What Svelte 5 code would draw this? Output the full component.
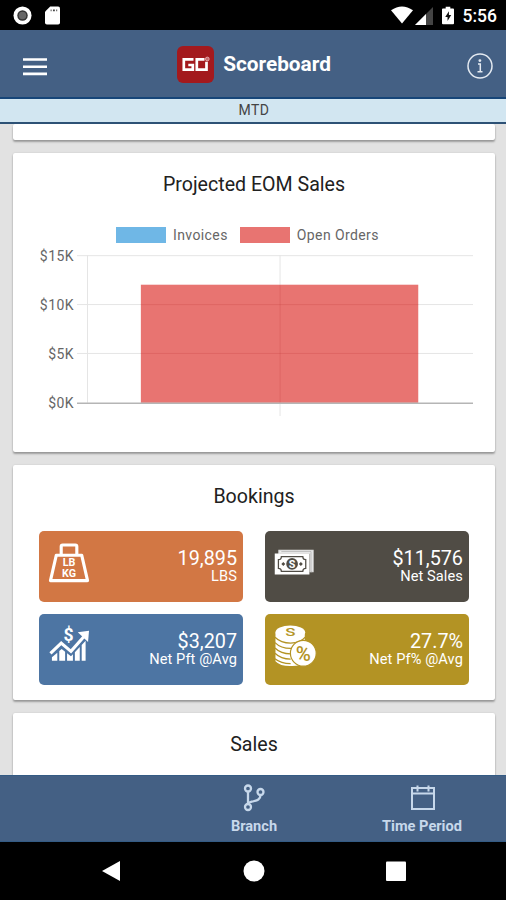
<script>
	const labels = ['$15K', '$10K', '$5K', '$0K'];
	const axisMax = 15;
	const openOrders = 12;

	const bookings = [
		{ icon: 'weight', value: '19,895', label: 'LBS', color: '#d27744' },
		{ icon: 'cash', value: '$11,576', label: 'Net Sales', color: '#504c45' },
		{ icon: 'growth', value: '$3,207', label: 'Net Pft @Avg', color: '#4d75a3' },
		{ icon: 'coins', value: '27.7%', label: 'Net Pf% @Avg', color: '#b39324' }
	];
</script>

<div class="screen">
	<div class="status">
		<svg class="record" viewBox="0 0 20 20">
			<circle cx="10" cy="10" r="9.5" fill="#fff" />
			<circle cx="10" cy="10" r="5.5" fill="#333" />
			<circle cx="10" cy="10" r="4" fill="#666" />
		</svg>
		<svg class="sd" viewBox="0 0 16 19">
			<path d="M5.500 0H14q2 0 2 2v15q0 2-2 2H2q-2 0-2-2V5.500z" fill="#fff" />
			<path d="M6 3h1v2H6zM8.500 3h2v2h-2zM12 3h1v2h-1z" fill="#444" />
		</svg>
		<svg class="wifi" viewBox="0 0 23 18">
			<path d="M0 4Q11.500-4 23 4L11.500 18z" fill="#fff" />
		</svg>
		<svg class="signal" viewBox="0 0 18 18">
			<path d="M18 0v18H0z" fill="#444" />
			<path d="M11 7v11H0z" fill="#fff" />
		</svg>
		<svg class="battery" viewBox="0 0 13 19">
			<path d="M4 0h5v2h3q1 0 1 1v15q0 1-1 1H1q-1 0-1-1V3q0-1 1-1h3z" fill="#fff" />
			<path d="M7.500 5 3.500 11h2.500v4.500l4-6.500h-2.500z" fill="#111" />
		</svg>
		<span class="clock">5:56</span>
	</div>

	<header>
		<svg class="menu" viewBox="0 0 24 18">
			<path d="M0 1.500h24M0 8.700h24M0 15.900h24" stroke="#fff" stroke-width="2.600" />
		</svg>
		<div class="brand">
			<svg class="logo" viewBox="0 0 37 37">
				<rect width="37" height="37" rx="6" fill="#a3191d" />
				<path d="M16.500 13.300H6.800v10.400h9v-4.700h-4.500" fill="none" stroke="#fff" stroke-width="2.700" />
				<path d="M27.500 13.300h-7.700v10.400h9.700v-8" fill="none" stroke="#fff" stroke-width="2.700" />
				<circle cx="30.300" cy="13" r="1.900" fill="#c96a6d" stroke="#e9b5b7" stroke-width=".8" />
			</svg>
			<h1>Scoreboard</h1>
		</div>
		<svg class="info" viewBox="0 0 26 26" fill="none" stroke="#e4eaf1" stroke-width="1.500">
			<circle cx="13" cy="13" r="12" />
			<path d="M11 11h2.300v7.500M10.500 18.700h5" />
			<circle cx="12.900" cy="7.600" r=".7" fill="#e4eaf1" />
		</svg>
	</header>
	<div class="period">MTD</div>

	<main>
		<section class="card previous"></section>

		<section class="card projected">
			<h2>Projected EOM Sales</h2>
			<div class="legend">
				<span class="swatch invoices"></span><span>Invoices</span>
				<span class="swatch orders"></span><span>Open Orders</span>
			</div>
			<div class="chart">
				<div class="axis">
					{#each labels as label}
						<span>{label}</span>
					{/each}
				</div>
				<svg class="plot" viewBox="0 0 397 162">
					<path d="M0 1.500h397M0 50.500h397M0 99.500h397M10.500 1v148M203.500 1v162" stroke="#e5e5e5" fill="none" />
					<rect
						x="64"
						y={149 - (openOrders / axisMax) * 148}
						width="278"
						height={(openOrders / axisMax) * 148}
						fill="#e87471"
					/>
					<path d="M64 50.500h278M64 99.500h278M203.500 31v118" stroke="#b83030" opacity=".2" fill="none" />
					<path d="M0 149.500h397" stroke="#b5b5b5" stroke-width="1.500" />
				</svg>
			</div>
		</section>

		<section class="card bookings">
			<h2>Bookings</h2>
			<div class="tiles">
				{#each bookings as item}
					<div class="tile" style="background-color: {item.color}">
						<svg class="icon" viewBox="0 0 42 42" fill="none" stroke="#fff">
							{#if item.icon === 'weight'}
								<path d="M12.500 13V4q0-1.500 1.500-1.500h13q1.500 0 1.500 1.500v9" stroke-width="3.200" />
								<path d="M7.500 13h26l6 26H1.500z" stroke-width="3.200" stroke-linejoin="round" />
								<text x="20.500" y="24.500" font-size="11">LB</text>
								<text x="20.500" y="35.500" font-size="11">KG</text>
							{:else if item.icon === 'cash'}
								<path d="M4 13V8h35v22h-3V11H4" fill="#eee" stroke="#ddd" stroke-width="1.200" />
								<path d="M6.500 9.300h30.500V31" stroke="#999" stroke-width=".6" />
								<path d="M.5 12h34v20H.5z" fill="#fff" stroke-width="1.500" />
								<path d="M6.500 14.500h22q0 3 3 3v9q-3 0-3 3h-22q0-3-3-3v-9q3 0 3-3z" stroke="#504c45" stroke-width="1.300" />
								<circle cx="17.500" cy="22" r="6" fill="#504c45" stroke="none" />
								<path d="m6.500 22 2-2 2 2-2 2zM24.500 22l2-2 2 2-2 2z" fill="#504c45" stroke="none" />
								<text x="17.500" y="26" font-size="11">S</text>
							{:else if item.icon === 'growth'}
								<path d="M1.500 28.500 12.500 18l10 8.500L37 10" stroke-width="3.200" />
								<path d="M29.500 7 41 5.500 40 17z" fill="#fff" stroke="none" />
								<path d="M3 32.500 8.500 28v8H3zM10.500 26l2.500-2 3.500 3v9h-6zM18.500 28.500l4 3 2-2V36h-6zM26.500 27.500l5-5.500v14h-5zM33.500 20l4-4.500V36h-4z" fill="#fff" stroke="none" />
								<text x="20" y="15.500" font-size="18">$</text>
							{:else}
								<path d="M.5 7.500v29q5 5.500 17 5 10 0 13-4v-30z" fill="#fff" stroke="none" />
								<path d="M0 12q6 6 16 6 10 0 15-6M0 17.500q6 6 16 6t15-6M0 23q6 6 16 6M0 28.500q6 6 16 6M0 34q6 5 16 5" stroke={item.color} stroke-width="1.300" />
								<ellipse cx="15.700" cy="7" rx="15.200" ry="7" fill="#fff" stroke="none" />
								<text transform="translate(15.700 11.200) scale(1.500 1)" font-size="11.500" fill={item.color}>S</text>
								<circle cx="29" cy="28.500" r="13.200" fill="#fff" stroke={item.color} stroke-width="1.200" />
								<text x="29" y="36" font-size="21" fill={item.color}>%</text>
							{/if}
						</svg>
						<div class="figures">
							<span class="value">{item.value}</span>
							<span class="label">{item.label}</span>
						</div>
					</div>
				{/each}
			</div>
		</section>

		<section class="card sales">
			<h2>Sales</h2>
		</section>
	</main>

	<nav class="tabs">
		<div></div>
		<div class="tab">
			<svg viewBox="0 0 28 28" fill="none" stroke="#c7d8eb" stroke-width="2.300">
				<circle cx="8" cy="4.500" r="3" />
				<circle cx="8" cy="23" r="3" />
				<circle cx="20.500" cy="8" r="3" />
				<path d="M8 7.500V20M20.500 11c0 5-4 5.500-8 6.500-3 .8-4.500 1-4.500 3" />
			</svg>
			<span>Branch</span>
		</div>
		<div class="tab">
			<svg viewBox="0 0 28 28" fill="none" stroke="#c7d8eb" stroke-width="2">
				<path d="M4 4h22v21H4zM4 9.500h22M9.500 1.500v6M20.500 1.500v6" />
			</svg>
			<span>Time Period</span>
		</div>
	</nav>

	<div class="system">
		<svg viewBox="0 0 22 22"><path d="M19 1v20L1 11z" /></svg>
		<svg viewBox="0 0 22 22"><circle cx="11" cy="11" r="10.500" /></svg>
		<svg viewBox="0 0 22 22"><rect x="1" y="1.500" width="20" height="19.500" rx="1" /></svg>
	</div>
</div>

<style>
	:global(body) {
		margin: 0;
	}

	.screen {
		display: flex;
		flex-direction: column;
		width: 506px;
		height: 900px;
		overflow: hidden;
		background: #e2e2e2;
		color: #212121;
		font-family: Roboto, sans-serif;
	}

	.status {
		display: flex;
		align-items: center;
		box-sizing: border-box;
		height: 30px;
		flex-shrink: 0;
		padding: 0 9px 0 13px;
		background: #000;
		color: #fff;
	}

	.record {
		width: 19px;
		margin-right: 13px;
	}

	.sd {
		width: 15px;
		height: 19px;
	}

	.wifi {
		width: 22px;
		height: 18px;
		margin-left: auto;
	}

	.signal {
		width: 18px;
		height: 18px;
		margin: 1px 9px 0 2px;
	}

	.battery {
		width: 12px;
		height: 19px;
		margin-right: 9px;
	}

	.clock {
		font-size: 17.5px;
		font-weight: 500;
		line-height: 30px;
		padding-top: 2px;
	}

	header {
		display: grid;
		grid-template-columns: 1fr auto 1fr;
		align-items: center;
		box-sizing: border-box;
		height: 69px;
		flex-shrink: 0;
		padding: 2px 13px 0 23px;
		background: #446084;
		border-bottom: 2px solid #164578;
	}

	.menu {
		width: 24px;
		height: 18px;
		margin-top: 4px;
	}

	.brand {
		display: flex;
		align-items: center;
		gap: 9px;
		margin-right: 8px;
	}

	.logo {
		width: 37px;
		height: 37px;
	}

	h1 {
		margin: 0 0 2px;
		color: #fff;
		font-size: 20.8px;
		font-weight: 700;
		line-height: 26px;
	}

	.info {
		width: 26px;
		height: 26px;
		margin-top: 3px;
		justify-self: end;
	}

	.period {
		box-sizing: border-box;
		height: 25px;
		flex-shrink: 0;
		border-bottom: 2px solid #2d5175;
		background: #d2e6f1;
		color: #444;
		font-size: 14px;
		line-height: 23px;
		text-align: center;
		letter-spacing: 0.4px;
		padding-left: 2px;
	}

	main {
		display: flex;
		flex-direction: column;
		gap: 13px;
		flex: 1;
		min-height: 0;
		overflow: hidden;
		padding: 0 11px 0 13px;
	}

	.card {
		box-sizing: border-box;
		flex-shrink: 0;
		background: #fff;
		border-radius: 2px;
		box-shadow: 0 2px 2px rgba(0, 0, 0, 0.3), 0 0 2px rgba(0, 0, 0, 0.12);
	}

	.previous {
		height: 16px;
	}

	.projected {
		height: 299px;
	}

	.bookings {
		height: 235px;
	}

	.sales {
		height: 80px;
	}

	h2 {
		margin: 0;
		padding-top: 19px;
		font-size: 19.6px;
		font-weight: 400;
		line-height: 26px;
		text-align: center;
	}

	.legend {
		display: flex;
		align-items: center;
		gap: 7px;
		height: 18px;
		margin: 28px 0 0 103px;
		color: #666;
		font-size: 14px;
		letter-spacing: 0.4px;
	}

	.swatch {
		width: 50px;
		height: 16px;
	}

	.invoices {
		background: #6fb7e6;
	}

	.orders {
		margin-left: 5px;
		background: #e87471;
	}

	.chart {
		display: flex;
		margin-top: 10px;
		padding-right: 22px;
	}

	.axis {
		display: flex;
		flex-direction: column;
		width: 61px;
		margin: -6px 3px 0 0;
		gap: 33px;
		color: #666;
		font-size: 14px;
		line-height: 16px;
		text-align: right;
		letter-spacing: 0.4px;
	}

	.plot {
		width: 397px;
		height: 162px;
	}

	.tiles {
		display: grid;
		grid-template-columns: 204px 204px;
		gap: 12px 22px;
		margin: 21px 0 0 26px;
	}

	.tile {
		display: flex;
		justify-content: space-between;
		box-sizing: border-box;
		height: 71px;
		padding: 11px 6px 0 10px;
		border-radius: 5px;
		color: #fff;
	}

	.icon {
		width: 41px;
		height: 42px;
		overflow: visible;
	}

	.icon text {
		fill: #fff;
		stroke: none;
		font-weight: 700;
		text-anchor: middle;
	}

	.icon text[fill] {
		fill: #b39324;
		font-weight: 500;
	}

	.figures {
		display: flex;
		flex-direction: column;
		text-align: right;
		padding-top: 5px;
	}

	.value {
		font-size: 19.8px;
		line-height: 23px;
	}

	.label {
		font-size: 14.6px;
		line-height: 13px;
		letter-spacing: 0.1px;
	}

	.tabs {
		display: grid;
		grid-template-columns: repeat(3, 1fr);
		height: 67px;
		flex-shrink: 0;
		box-sizing: border-box;
		padding-left: 2px;
		background: #446084;
		box-shadow: inset 0 1px #345b84, inset 0 -1px #345b84;
	}

	.tab {
		display: flex;
		flex-direction: column;
		align-items: center;
		gap: 6px;
		padding-top: 9px;
		color: #c7d8eb;
		font-size: 14.6px;
		font-weight: 700;
		line-height: 16px;
	}

	.tab svg {
		width: 28px;
		height: 28px;
	}

	.system {
		display: flex;
		justify-content: center;
		align-items: center;
		gap: 120px;
		height: 58px;
		flex-shrink: 0;
		padding-left: 2px;
		background: #000;
	}

	.system svg {
		width: 22px;
		height: 22px;
		fill: #fff;
	}
</style>
